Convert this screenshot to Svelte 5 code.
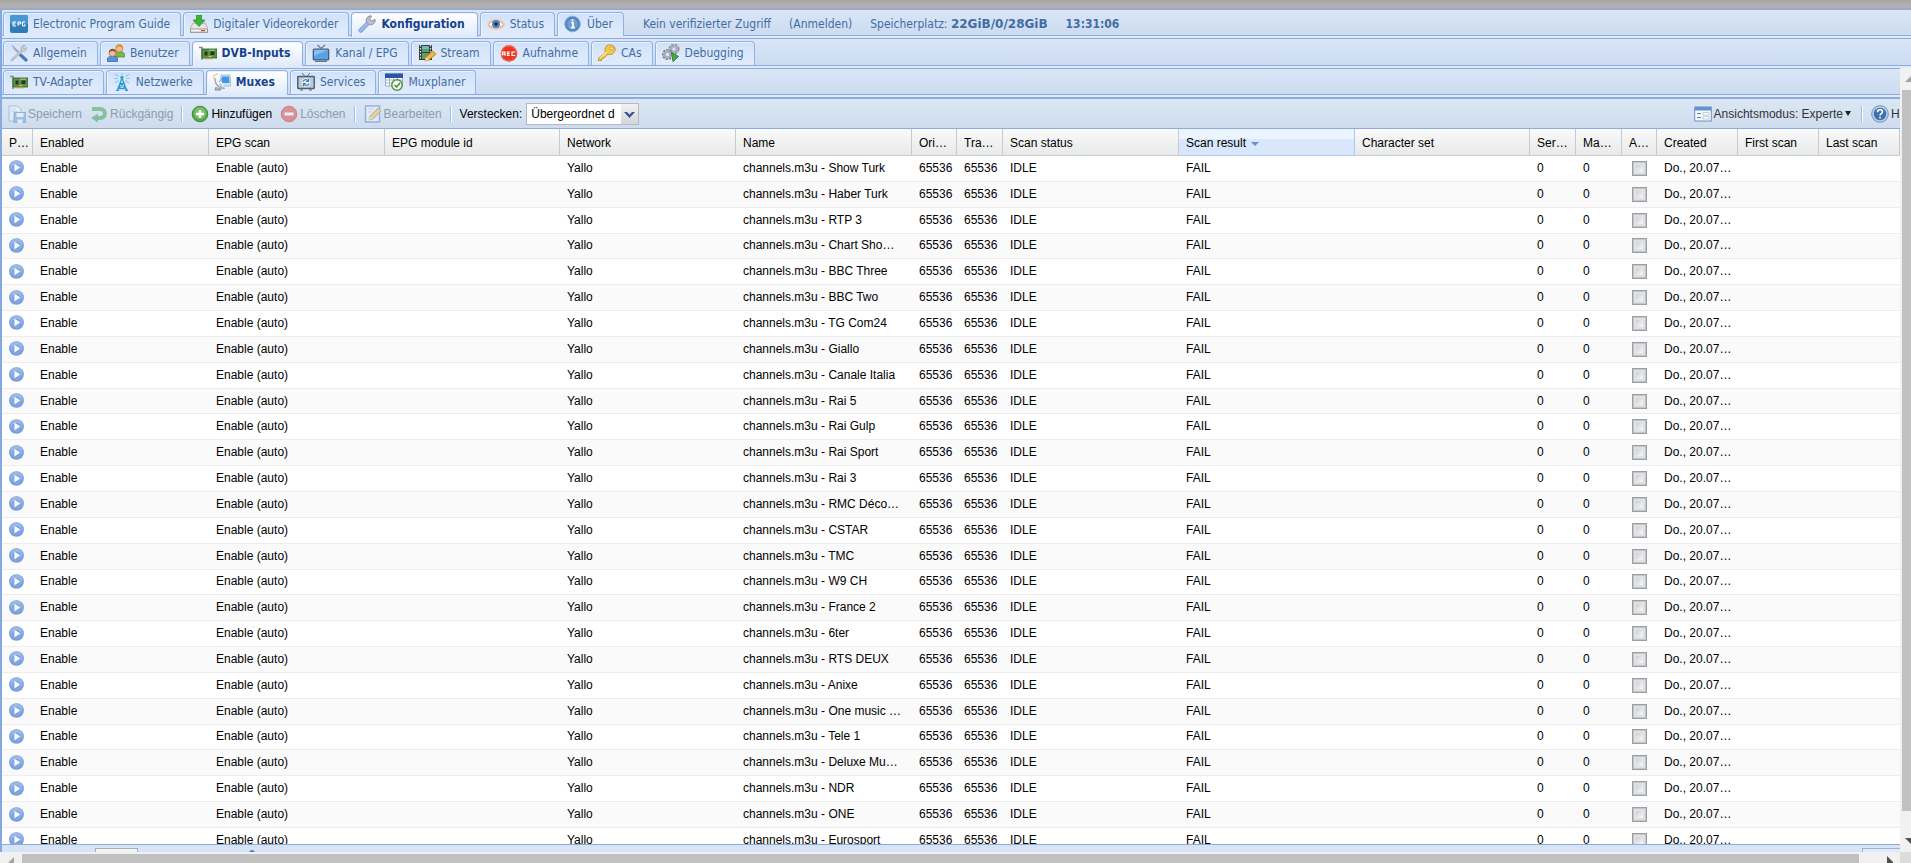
<script lang="ts">
  // Mux grid of the DVB inputs configuration: three stacked tab bars,
  // a toolbar and the sortable table below it.
  type Tab = { label: string; icon: string };

  const mainTabs: Tab[] = [
    { label: 'Electronic Program Guide', icon: 'epg' },
    { label: 'Digitaler Videorekorder', icon: 'dvr' },
    { label: 'Konfiguration', icon: 'wrench' },
    { label: 'Status', icon: 'eye' },
    { label: 'Über', icon: 'info' },
  ];
  const configTabs: Tab[] = [
    { label: 'Allgemein', icon: 'tools' },
    { label: 'Benutzer', icon: 'users' },
    { label: 'DVB-Inputs', icon: 'card' },
    { label: 'Kanal / EPG', icon: 'tv' },
    { label: 'Stream', icon: 'film' },
    { label: 'Aufnahme', icon: 'rec' },
    { label: 'CAs', icon: 'key' },
    { label: 'Debugging', icon: 'gears' },
  ];
  const inputTabs: Tab[] = [
    { label: 'TV-Adapter', icon: 'card' },
    { label: 'Netzwerke', icon: 'tower' },
    { label: 'Muxes', icon: 'dish' },
    { label: 'Services', icon: 'services' },
    { label: 'Muxplaner', icon: 'schedule' },
  ];

  let mainTab = $state(2);
  let configTab = $state(2);
  let inputTab = $state(2);

  const columns = [
    { label: 'Play', width: 31 },
    { label: 'Enabled', width: 176 },
    { label: 'EPG scan', width: 176 },
    { label: 'EPG module id', width: 175 },
    { label: 'Network', width: 176 },
    { label: 'Name', width: 176 },
    { label: 'Original network ID', width: 45 },
    { label: 'Transport stream ID', width: 46 },
    { label: 'Scan status', width: 176 },
    { label: 'Scan result', width: 176, sorted: true },
    { label: 'Character set', width: 175 },
    { label: 'Services', width: 46 },
    { label: 'Mapped', width: 46 },
    { label: 'Accept', width: 35 },
    { label: 'Created', width: 81 },
    { label: 'First scan', width: 81 },
    { label: 'Last scan', width: 81 },
  ];

  const names = [
    'Show Turk', 'Haber Turk', 'RTP 3', 'Chart Show TV', 'BBC Three', 'BBC Two', 'TG Com24',
    'Giallo', 'Canale Italia', 'Rai 5', 'Rai Gulp', 'Rai Sport', 'Rai 3', 'RMC Découverte',
    'CSTAR', 'TMC', 'W9 CH', 'France 2', '6ter', 'RTS DEUX', 'Anixe', 'One music television',
    'Tele 1', 'Deluxe Music HD', 'NDR', 'ONE', 'Eurosport',
  ];
</script>

{#snippet icon(name: string)}
  <svg class="icon" viewBox="0 0 18 18" width="18" height="18" aria-hidden="true">
    {#if name === 'epg'}
      <rect width="18" height="18" rx="2" fill="#2f7cba" />
      <rect width="18" height="9" rx="2" fill="#4b97d2" />
      <path d="M6 7H3v4h3M3 9h2.500M8 11V7h2.500v2H8M15 7h-2.500v4H15V9" fill="none" stroke="#fff" stroke-width="1" />
    {:else if name === 'dvr'}
      <path d="M3 8h12l3 6v3.500H0V14z" fill="#e6e6e4" stroke="#a3a09a" stroke-width=".8" />
      <path d="M.5 14h17v3.200H.5z" fill="#f6f4f0" stroke="#8c8984" stroke-width=".8" />
      <path d="M11 15.600h4" stroke="#d23a24" stroke-width="1.200" />
      <path d="M6.500 0h5v5h3.500L9 11.500 3 5h3.500z" fill="#3db53a" stroke="#1b8a24" stroke-width=".7" />
    {:else if name === 'wrench'}
      <path d="M1 14.500 8.500 7C7.500 3.500 10 .5 13.500 1l-2 2.800 2.300 2.500 3.200-1.800c.5 3.500-2.500 6-6 5L4 17c-2 1-4-1-3-2.500z" fill="#9fb7ea" stroke="#7189c4" stroke-width=".8" />
      <path d="M8.500 7C7.500 3.500 10 .5 13.500 1l-2 2.800 2.300 2.500 3.200-1.800c.5 3.500-2.500 6-6 5z" fill="#bcbfc9" stroke="#898d9c" stroke-width=".7" />
    {:else if name === 'eye'}
      <path d="M0 9.500C2 1.500 16 1.500 18 9.500 15 17 3 17 0 9.500z" fill="#f1cfae" />
      <path d="M1.500 9.500C5 4.500 13 4.500 16.500 9.500 12 14 6 14 1.500 9.500z" fill="#fff" stroke="#c79470" stroke-width=".8" />
      <circle cx="9" cy="9" r="4" fill="#4c83cb" /><circle cx="9" cy="9" r="1.800" fill="#162b50" />
    {:else if name === 'info'}
      <circle cx="8.500" cy="9" r="7.800" fill="#4d83bc" stroke="#8eb0d2" />
      <circle cx="8.500" cy="9" r="5.500" fill="#6c9ed1" />
      <path d="M7 7.500H9v5M6.800 12.700h4M8.500 4.300v1.700" fill="none" stroke="#fff" stroke-width="1.700" />
    {:else if name === 'tools'}
      <path d="M4 4l11 11" stroke="#a4aab2" stroke-width="2.200" /><path d="M1 1l4 2-1 2z" fill="#a4aab2" />
      <path d="M10 10.500l6 5.500" stroke="#4c78bd" stroke-width="3.200" stroke-linecap="round" />
      <path d="M2 16 12.500 6" stroke="#bec3c9" stroke-width="3" stroke-linecap="round" />
      <path d="M15 1.500l-2 2 1 1.500 2.500-1.500c.5 3-2 4.500-4.500 3.500C10 4 12 .8 15 1.500z" fill="#d5d9dd" stroke="#9299a1" stroke-width=".7" />
    {:else if name === 'users'}
      <path d="M7 13V9.500c2-2.500 9-2.500 10.500 0V13z" fill="#7db548" stroke="#538432" stroke-width=".7" />
      <circle cx="12.300" cy="4.500" r="3.600" fill="#f0c084" stroke="#ae7439" stroke-width=".7" />
      <path d="M8.600 4c0-5 7.500-5 7.300 0-3-2-5-2-7.300 0z" fill="#d29233" />
      <path d="M.5 17.500V14c2-2.500 8.500-2.500 10 0v3.500z" fill="#5790dd" stroke="#2e62ab" stroke-width=".7" />
      <circle cx="5.500" cy="9" r="3.500" fill="#f0bd91" stroke="#a66743" stroke-width=".7" />
      <path d="M1.900 8.500c0-5 7.400-5 7.200 0-3-2-5-2-7.200 0z" fill="#96502a" />
    {:else if name === 'card'}
      <path d="M0 3.500h3V16" fill="none" stroke="#85898c" stroke-width="1.600" />
      <path d="M3 5h15v9H3z" fill="#5c9447" stroke="#2e5826" stroke-width=".8" />
      <path d="M5 14.500h9" stroke="#c3a33b" stroke-width="1.500" />
      <path d="M5.500 7.500h3v4h-3zM11.500 7.500h4v3.500h-4z" fill="#1e3c1d" /><path d="M10 6.200h6M9.500 12.500h3" stroke="#a2d081" />
    {:else if name === 'tv'}
      <path d="M5.500 1L9 4.500 13 1" fill="none" stroke="#717a85" stroke-width="1.200" />
      <rect x=".7" y="4.500" width="16.600" height="12" rx="1.500" fill="#4e5b6b" />
      <rect x="2" y="5.800" width="14" height="9.400" fill="#55a2ea" /><path d="M2 5.800h14L2 12z" fill="#85c0f4" />
      <path d="M3 17.300h12" stroke="#4e5b6b" />
    {:else if name === 'film'}
      <path d="M1 1h13v15H1z" fill="#343d3a" /><path d="M4 2h7v6H4zM4 9h7v6H4z" fill="#5d9f65" />
      <path d="M4 2h7v3H4z" fill="#70b9bf" />
      <path d="M2.500 1v15M12.500 1v15" stroke="#dce2df" stroke-width="1.200" stroke-dasharray="1.500 1.500" />
      <path d="M7 17l1-4 6.500-6L18 10l-7 6z" fill="#f1b743" stroke="#ae7424" stroke-width=".8" />
      <path d="M7 17l1-4 3 3z" fill="#f1d4ac" />
    {:else if name === 'rec'}
      <circle cx="9" cy="9.500" r="8.300" fill="#ee3423" /><circle cx="9" cy="9.500" r="7.300" fill="none" stroke="#f8664d" />
      <path d="M2.500 11.500V8h2.500v2h-2.500M4 9.800l1.500 1.700M9.800 8h-2.300v3.500h2.300M7.500 9.700h2M15 8H12v3.500h3" fill="none" stroke="#fff" stroke-width="1.200" />
    {:else if name === 'key'}
      <path d="M7.500 8.500C5.500 4 9 0 13 1c4 .5 5.500 5 3 7.500-1.500 2-4 2.500-6 1.700L6 14H4l-.3 2.500H.5V14z" fill="#f2c74a" stroke="#c28f25" stroke-width=".9" />
      <circle cx="13.500" cy="4.500" r="1.500" fill="#fff3c1" stroke="#bd8b25" stroke-width=".7" />
      <path d="M2 14l7-6" stroke="#ffe994" stroke-width="1.200" />
    {:else if name === 'gears'}
      <circle cx="12" cy="5" r="4" fill="none" stroke="#8a8f9c" stroke-width="3" stroke-dasharray="2.200 1" />
      <circle cx="12" cy="5" r="3" fill="none" stroke="#a7acb8" stroke-width="2.500" />
      <circle cx="5.500" cy="10.500" r="4.300" fill="none" stroke="#777d8c" stroke-width="2.500" stroke-dasharray="2 1.100" />
      <circle cx="5.500" cy="10.500" r="3" fill="none" stroke="#a7acb8" stroke-width="2.500" />
      <path d="M9.500 8.500l7 4-5.500 5z" fill="#48aa43" stroke="#2a862e" />
    {:else if name === 'tower'}
      <path d="M9 5L4.500 17M9 5l4.500 12M7 10.500h4L5 15.500M7 10.500l6 5H5M3 17.300h3M12 17.300h3" fill="none" stroke="#2a9ccc" stroke-width="1.300" />
      <circle cx="9" cy="4.500" r="1.800" fill="#3da7d4" />
      <path d="M5.500 3.500L2 1M5 5.500H1M5.500 7.500L2 10M12.500 3.500L16 1M13 5.500h4M12.500 7.500L16 10M9 2V0" stroke="#88cceb" stroke-width="1.100" />
    {:else if name === 'dish'}
      <path d="M8 2h9l1 11H7z" fill="#d8e2ed" stroke="#94a8bd" stroke-width=".7" /><path d="M9 3.500h7l.6 6.500H8z" fill="#389bea" />
      <path d="M2 5c0 6 4 10 10 10-5 2.500-11-3-10-10z" fill="#c4cbd3" stroke="#8996a5" stroke-width=".7" />
      <path d="M2 5l10 10L8 7z" fill="#f2f4f6" /><path d="M6 9l3-3M3 14l-1 3h6l-2-2" stroke="#8493a3" fill="#aab5c0" />
      <path d="M0 6c0-3 2-5 5-5" fill="none" stroke="#f4ca91" stroke-width="1.300" />
    {:else if name === 'services'}
      <path d="M5 0l3 3.500M13 0l-3 3.500" stroke="#66717d" />
      <rect x=".7" y="3.500" width="16.600" height="12" rx="1" fill="#b9c9d6" stroke="#526170" stroke-width="1.600" />
      <circle cx="9" cy="9.500" r="4.500" fill="#e7f0f8" />
      <path d="M6 8.500c1-2.500 4-2.500 5-.5M12 10.500c-1 2.500-4 2.500-5 .5M11.500 6v2.500H9M6.500 13v-2.500H9" fill="none" stroke="#4380b6" stroke-width="1.200" /><path d="M3 17h3M12 17h3" stroke="#526170" />
    {:else if name === 'schedule'}
      <path d="M.5 1h17v12H.5z" fill="#fff" stroke="#9aaec9" /><path d="M0 .5h18V5H0z" fill="#2a55a5" />
      <path d="M1 7h16M1 10h12M4.500 5v8M8.500 5v8M12.500 5v8" stroke="#9caecb" stroke-width=".9" />
      <circle cx="12" cy="12" r="5.200" fill="#f3faf0" stroke="#4d9744" stroke-width="1.500" />
      <path d="M9.500 12l2 2 3.500-4" fill="none" stroke="#4f6c4a" stroke-width="1.200" />
    {:else if name === 'save'}
      <path d="M1 1h9l3 3v12H1z" fill="#eef5fc" stroke="#77a5d5" /><path d="M3 4h5M3 6.500h7" stroke="#b9d0e8" />
      <path d="M6 7.500h12V18H6z" fill="#6e9fda" stroke="#4d7fbe" /><path d="M8.500 8h7v4h-7zM9.500 14.500h5V18h-5z" fill="#f4f8fc" />
    {:else if name === 'undo'}
      <path d="M2 4h8c6.500 0 6.500 9 0 9H7" fill="none" stroke="#38a047" stroke-width="4" /><path d="M8 8.500v9L1 13z" fill="#38a047" />
    {:else if name === 'add'}
      <circle cx="9" cy="9" r="7.800" fill="#58a84b" stroke="#3c8b38" /><circle cx="9" cy="8" r="6" fill="#7bbe67" />
      <path d="M9 5v8M5 9h8" stroke="#fff" stroke-width="2.600" />
    {:else if name === 'remove'}
      <circle cx="9" cy="9" r="7.800" fill="#e1413e" stroke="#bd2c2b" /><path d="M4.500 9h9" stroke="#fff" stroke-width="3" />
    {:else if name === 'edit'}
      <rect x="1.500" y="1" width="14" height="16" fill="#f0f6fd" stroke="#4d88d0" stroke-width="1.500" /><path d="M4 4h6M4 7h4" stroke="#a8c0dc" />
      <path d="M5 15l1-4 8-8 3 3-8 8z" fill="#efbd4e" stroke="#a97f33" /><path d="M5 15l1-4 3 3z" fill="#e9d0ac" />
    {:else if name === 'view'}
      <rect x=".7" y="2" width="16.600" height="14" fill="#f5f9fe" stroke="#6991c5" /><path d="M1 2h16v3.500H1z" fill="#6592d0" />
      <path d="M3 8.500h4M3 12.500h4" stroke="#6286b4" /><path d="M9 7.500h6v2.500H9zM9 11.500h6V14H9z" fill="#fff" stroke="#b7c3d2" stroke-width=".8" />
    {:else if name === 'help'}
      <circle cx="9" cy="9" r="8.300" fill="#b9cee9" stroke="#6f93c5" /><circle cx="9" cy="9" r="6.200" fill="#3e6fb1" />
      <path d="M6.500 7.300c0-3.600 5-3.300 5-.5 0 1.800-2.500 1.700-2.500 3.700M9 11.800v1.600" fill="none" stroke="#fff" stroke-width="1.600" />
    {:else if name === 'play'}
      <circle cx="9" cy="9" r="8.800" fill="#7099da" /><circle cx="9" cy="8" r="7.300" fill="#98b9ea" />
      <circle cx="9" cy="10.500" r="6" fill="#80a5e1" /><path d="M6.500 4.500v9l7-4.500z" fill="#fff" />
    {/if}
  </svg>
{/snippet}

{#snippet tabs(items: Tab[], active: number, select: (i: number) => void)}
  <div class="tabs" role="tablist">
    {#each items as tab, i}
      <button class="tab" class:active={i === active} role="tab" aria-selected={i === active} onclick={() => select(i)}>
        {@render icon(tab.icon)}{tab.label}
      </button>
    {/each}
  </div>
{/snippet}

<div class="page">
  <div class="chrome"></div>
  <header class="bar">
    {@render tabs(mainTabs, mainTab, (i) => (mainTab = i))}
    <div class="session">
      <span>Kein verifizierter Zugriff</span>
      <a href="#login">(Anmelden)</a>
      <span>Speicherplatz: <b class="space">22GiB/0/28GiB</b></span>
      <b>13:31:06</b>
    </div>
  </header>
  <nav class="bar">{@render tabs(configTabs, configTab, (i) => (configTab = i))}</nav>

  <div class="frame">
    <main class="panel">
      <nav class="bar">{@render tabs(inputTabs, inputTab, (i) => (inputTab = i))}</nav>

      <div class="toolbar">
        <button disabled>{@render icon('save')}Speichern</button>
        <button disabled>{@render icon('undo')}Rückgängig</button>
        <i class="sep"></i>
        <button>{@render icon('add')}Hinzufügen</button>
        <button disabled>{@render icon('remove')}Löschen</button>
        <i class="sep"></i>
        <button disabled>{@render icon('edit')}Bearbeiten</button>
        <i class="sep"></i>
        <label for="hide-mode">Verstecken:</label>
        <span class="combo">
          <select id="hide-mode">
            <option>Übergeordnet deaktiviert</option>
            <option>Alle</option>
            <option>Keine</option>
          </select>
          <svg viewBox="0 0 18 20" width="18" height="20" aria-hidden="true">
            <path d="M4 8h3l2.500 2.500L12 8h3l-5.500 6z" fill="#35538c" />
          </svg>
        </span>
        <div class="right">
          <button class="mode">{@render icon('view')}Ansichtsmodus: Experte<span class="caret"></span></button>
          <i class="sep"></i>
          <button>{@render icon('help')}Hilfe</button>
        </div>
      </div>

      <div class="grid">
        <table>
          <colgroup>
            {#each columns as col}<col style:width="{col.width}px" />{/each}
          </colgroup>
          <thead>
            <tr>
              {#each columns as col}
                <th class:sorted={col.sorted} aria-sort={col.sorted ? 'descending' : undefined}>
                  {col.label}{#if col.sorted}<span class="arrow"></span>{/if}
                </th>
              {/each}
            </tr>
          </thead>
          <tbody>
            {#each names as name}
              <tr>
                <td><button class="play" aria-label="Play {name}">{@render icon('play')}</button></td>
                <td>Enable</td>
                <td>Enable (auto)</td>
                <td></td>
                <td>Yallo</td>
                <td class="name">channels.m3u - {name}</td>
                <td>65536</td>
                <td>65536</td>
                <td>IDLE</td>
                <td>FAIL</td>
                <td></td>
                <td>0</td>
                <td>0</td>
                <td class="check"><input type="checkbox" aria-label="Accept {name}" /></td>
                <td>Do., 20.07.2023</td>
                <td></td>
                <td></td>
              </tr>
            {/each}
          </tbody>
        </table>
      </div>

      <footer class="paging">
        <input class="page-no" aria-label="Seite" />
        <svg class="refresh" viewBox="0 0 6 3" width="6" height="3" aria-hidden="true"><path d="M0 3q3-4 6 0z" fill="#4c7bbd" /></svg>
        <span class="per-page"></span>
      </footer>
    </main>

    <div class="vscroll">
      <svg viewBox="0 0 11 22" width="11" height="22"><path d="M5 14l6-6v6z" fill="#a3a3a3" /></svg>
      <div class="thumb"></div>
      <svg viewBox="0 0 11 41" width="11" height="41"><path d="M5 27h6v6z" fill="#505050" /></svg>
    </div>
  </div>

  <div class="hscroll">
    <svg viewBox="0 0 22 11" width="22" height="11"><path d="M8 11l6-6v6z" fill="#a3a3a3" /></svg>
    <div class="thumb"></div>
    <svg viewBox="0 0 41 11" width="41" height="11"><path d="M28 4l6 6v1h-6z" fill="#505050" /></svg>
    <div class="corner"></div>
  </div>
</div>

<style>
  :global(body) { margin: 0; overflow: hidden; }
  * { box-sizing: border-box; }

  .page {
    height: 100vh; display: flex; flex-direction: column; overflow: hidden;
    background: #deeafb; color: #000; font: 12px/16px "Liberation Sans", Arial, sans-serif;
  }
  button { font: inherit; color: inherit; cursor: pointer; }
  .icon { display: block; flex: none; }
  .chrome { flex: none; height: 9px; background: linear-gradient(#a5a5a3, #b4b2b0 70%, #a3a9b3); }

  /* tab bars */
  .bar {
    flex: none; display: flex; height: 29px; padding: 2px 0 0 1px;
    border-top: 1px solid #8cacdd; border-left: 2px solid #84a9e0;
    background: linear-gradient(#dbe6f6, #cbdbf1 25px, #8cacdd 25px, #8cacdd 26px, #deeafb 26px);
    color: #416da3; font: 12px/16px "DejaVu Sans Condensed", "DejaVu Sans", Tahoma, sans-serif;
  }
  nav.bar {
    height: 30px;
    background: linear-gradient(#dbe6f6, #cbdbf1 26px, #8cacdd 26px, #8cacdd 27px, #deeafb 27px);
  }
  .panel nav.bar {
    height: 29px; padding-top: 1px;
    background: linear-gradient(#dbe6f6, #cbdbf1 25px, #8cacdd 25px, #8cacdd 26px, #deeafb 26px);
  }
  .tabs { display: flex; gap: 2px; height: 24px; }
  .tab {
    display: flex; align-items: center; gap: 5px; height: 24px; padding: 0 10px 2px 6px; white-space: nowrap;
    border: 1px solid #8db2e3; border-bottom: 0; border-radius: 4px 4px 0 0;
    background: linear-gradient(#cfe0f8, #dbe8fb 50%, #dfebfd); box-shadow: inset 0 1px #eaf3ff, inset 1px 0 #eaf3ff;
  }
  .tab.active {
    height: 25px; padding: 0 12px 3px 6px; color: #15428b; font-weight: bold;
    background: linear-gradient(#fff, #eff5fe 50%, #deeafb);
  }
  .session { display: flex; align-items: center; gap: 18px; height: 23px; margin-left: 19px; white-space: nowrap; }
  .session a { color: inherit; text-decoration: none; }
  .space { font-family: "DejaVu Sans", Verdana, sans-serif; }

  .frame { flex: 1; min-height: 0; display: flex; }
  .panel { flex: 1; min-width: 0; display: flex; flex-direction: column; }

  /* toolbar */
  .toolbar {
    flex: none; display: flex; align-items: center; height: 32px; overflow: hidden; padding-left: 6px;
    border: solid #8cacdd; border-width: 2px 0 1px 2px; background: linear-gradient(#dbe7f4, #cedcee);
  }
  .toolbar button {
    display: flex; align-items: center; gap: 2px; margin-right: 8px; padding: 0;
    border: 0; background: none; white-space: nowrap;
  }
  .toolbar button:disabled { color: #8f9bab; cursor: default; }
  .toolbar button:disabled .icon { opacity: 0.5; }
  .toolbar .mode { margin-right: 10px; }
  .sep { flex: none; width: 2px; height: 16px; margin-right: 8px; border-left: 1px solid #98c0f4; background: #fff; }
  .combo { position: relative; display: flex; margin-left: 4px; }
  .combo select {
    width: 113px; height: 22px; padding: 0 23px 0 4px; appearance: none; border: 1px solid #b5b8c8; border-radius: 0;
    background: linear-gradient(#fff, #fff) 0 0 / 94px 22px no-repeat, linear-gradient(#f1f1f1, #d5d5d8);
    color: #000; font: inherit;
  }
  .combo svg { position: absolute; right: 1px; top: 1px; pointer-events: none; }
  .right { display: flex; align-items: center; margin: 0 -23px 0 auto; color: #333; }
  .caret { border: solid transparent; border-width: 5px 3px 0; border-top-color: #222; }

  /* grid */
  .grid { flex: 1; min-height: 0; overflow: hidden; border-left: 2px solid #84a9e0; background: #fff; }
  table { width: 100%; height: 725px; table-layout: fixed; border-collapse: separate; border-spacing: 0; }
  th, td { padding: 0 4px 1px 7px; overflow: hidden; text-overflow: ellipsis; white-space: nowrap; text-align: left; font-weight: normal; }
  th {
    height: 27px; padding-top: 2px; padding-bottom: 0; border-right: 1px solid #c9cacc; border-bottom: 1px solid #c9cacc;
    background: linear-gradient(#fafafa, #e8e9ea);
  }
  th.sorted { background: linear-gradient(#ecf4fd 40%, #d8e7fb 40%); border-color: #aec7ea; }
  .arrow { display: inline-block; margin: 0 0 1px 5px; border: solid transparent; border-width: 4px 4px 0; border-top-color: #6b8fc9; }
  td { border-bottom: 1px solid #ededed; }
  td.name { padding-right: 9px; }
  tbody tr:nth-child(even) { background: #fafafa; }
  .play { display: block; padding: 0; border: 0; background: none; }
  .play .icon { width: 15px; height: 15px; }
  td.check { padding: 0; }
  .check input {
    display: block; width: 15px; height: 15px; margin: 0 auto; appearance: none;
    border: 1px solid #9b9fa3; background: linear-gradient(135deg, #b9bcbf, #f4f4f4 70%);
    box-shadow: inset 0 0 0 1px #c3c5c8, inset 0 0 0 3px #e0e1e2;
  }

  .paging {
    flex: none; display: flex; align-items: flex-end; height: 8px; overflow: hidden; padding-left: 93px;
    border-top: 1px solid #8cacdd; border-left: 2px solid #84a9e0; background: #d7e4f5;
  }
  .page-no { width: 43px; height: 4px; padding: 0; border: 1px solid #a9adb8; border-bottom: 0; background: #f4f4f4; }
  .refresh { margin-left: 111px; }
  .per-page { width: 38px; height: 4px; margin-left: auto; border: 1px solid #98b2da; border-width: 1px 0 0 1px; background: #dfe9f8; }

  /* scroll bars */
  .vscroll { flex: none; width: 11px; display: flex; flex-direction: column; background: #f1f1f1; }
  .vscroll svg, .hscroll svg { flex: none; display: block; }
  .thumb { flex: 1; background: #c1c1c1; }
  .vscroll .thumb { margin-left: 2px; }
  .hscroll { flex: none; display: flex; height: 11px; background: #f1f1f1; }
  .hscroll .thumb { margin-top: 2px; }
  .corner { width: 11px; background: #dcdcdc; }
</style>
